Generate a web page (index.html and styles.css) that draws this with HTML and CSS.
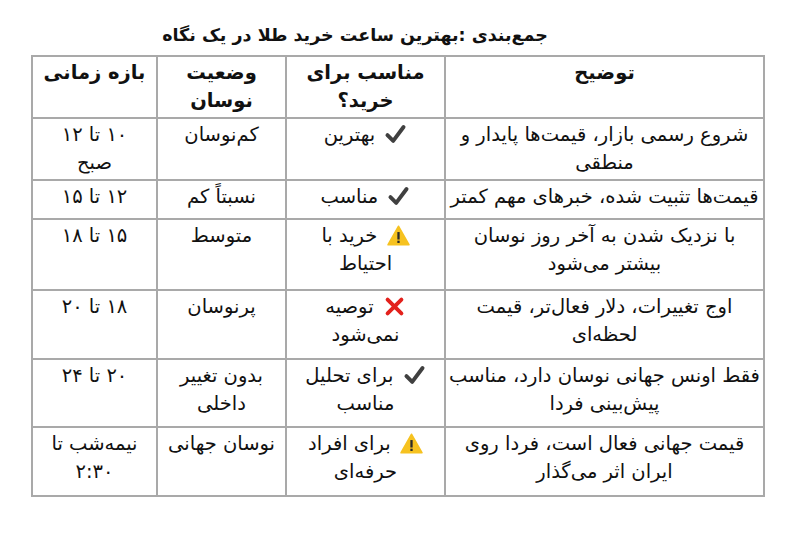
FILE: index.html
```html
<!DOCTYPE html>
<html lang="fa">
<head>
<meta charset="utf-8">
<title>جمع‌بندی</title>
<link rel="stylesheet" href="styles.css">
</head>
<body>
<div class="page">
  <div class="title" dir="rtl">جمع‌بندی :بهترین ساعت خرید طلا در یک نگاه</div>
  <table class="grid" dir="rtl">
    <colgroup>
      <col class="c-desc"><col class="c-fit"><col class="c-vol"><col class="c-time">
    </colgroup>
    <tr class="r-head">
      <th>توضیح</th>
      <th>مناسب برای<br>خرید؟</th>
      <th>وضعیت<br>نوسان</th>
      <th>بازه زمانی</th>
    </tr>
    <tr class="r1">
      <td>شروع رسمی بازار، قیمت‌ها پایدار و<br>منطقی</td>
      <td><svg class="ic" viewBox="0 0 20 20"><path class="chk" d="M3 10.5 L8 15.5 L17 3.5"/></svg> بهترین</td>
      <td>کم‌نوسان</td>
      <td>۱۰ تا ۱۲<br>صبح</td>
    </tr>
    <tr class="r2">
      <td>قیمت‌ها تثبیت شده، خبرهای مهم کمتر</td>
      <td><svg class="ic" viewBox="0 0 20 20"><path class="chk" d="M3 10.5 L8 15.5 L17 3.5"/></svg> مناسب</td>
      <td>نسبتاً کم</td>
      <td>۱۲ تا ۱۵</td>
    </tr>
    <tr class="r3">
      <td>با نزدیک شدن به آخر روز نوسان<br>بیشتر می‌شود</td>
      <td><svg class="ic" viewBox="0 0 20 20"><path class="tri" d="M10 2 L19 18 L1 18 Z"/><rect class="ex" x="9" y="7" width="2" height="6.5"/><rect class="ex" x="9" y="14.5" width="2" height="2"/></svg> خرید با<br>احتیاط</td>
      <td>متوسط</td>
      <td>۱۵ تا ۱۸</td>
    </tr>
    <tr class="r4">
      <td>اوج تغییرات، دلار فعال‌تر، قیمت<br>لحظه‌ای</td>
      <td><svg class="ic" viewBox="0 0 20 20"><path class="crs" d="M4 4 L16 16 M16 4 L4 16"/></svg> توصیه<br>نمی‌شود</td>
      <td>پرنوسان</td>
      <td>۱۸ تا ۲۰</td>
    </tr>
    <tr class="r5">
      <td>فقط اونس جهانی نوسان دارد، مناسب<br>پیش‌بینی فردا</td>
      <td><svg class="ic" viewBox="0 0 20 20"><path class="chk" d="M3 10.5 L8 15.5 L17 3.5"/></svg> برای تحلیل<br>مناسب</td>
      <td>بدون تغییر<br>داخلی</td>
      <td>۲۰ تا ۲۴</td>
    </tr>
    <tr class="r6">
      <td>قیمت جهانی فعال است، فردا روی<br>ایران اثر می‌گذار</td>
      <td><svg class="ic" viewBox="0 0 20 20"><path class="tri" d="M10 2 L19 18 L1 18 Z"/><rect class="ex" x="9" y="7" width="2" height="6.5"/><rect class="ex" x="9" y="14.5" width="2" height="2"/></svg> برای افراد<br>حرفه‌ای</td>
      <td>نوسان جهانی</td>
      <td>نیمه‌شب تا<br>۲:۳۰</td>
    </tr>
  </table>
</div>
</body>
</html>
```
FILE: styles.css
```css
html, body {
  margin: 0;
  padding: 0;
  background: #ffffff;
}
.page {
  padding: 22px 37px 0 31px;
  font-family: "DejaVu Sans", "Noto Sans", sans-serif;
  color: #111111;
}
.title {
  height: 33px;
  line-height: 26px;
  font-size: 17.5px;
  font-weight: bold;
  text-align: center;
  padding-right: 84px;
}
.grid {
  width: 732px;
  border-collapse: collapse;
  table-layout: fixed;
  font-size: 19.5px;
  line-height: 28px;
}
.c-desc { width: 319px; }
.c-fit { width: 159px; }
.c-vol { width: 129px; }
.c-time { width: 125px; }
.grid th, .grid td {
  border: 2px solid #a9a9a9;
  vertical-align: top;
  text-align: center;
  padding: 2px 2px 0;
  font-weight: normal;
  white-space: nowrap;
}
.grid th {
  font-weight: bold;
}
.r-head { height: 62px; }
.r1 { height: 62px; }
.r2 { height: 39px; }
.r3 { height: 71px; }
.r4 { height: 69px; }
.r5 { height: 68px; }
.r6 { height: 69px; }
.ic {
  width: 23px;
  height: 23px;
  vertical-align: -5px;
  margin-left: 3px;
}
.chk {
  fill: none;
  stroke: #404040;
  stroke-width: 3.4;
  stroke-linecap: round;
  stroke-linejoin: round;
}
.crs {
  fill: none;
  stroke: #e3211c;
  stroke-width: 3.4;
  stroke-linecap: round;
}
.tri {
  fill: #f6c220;
  stroke: #f6c220;
  stroke-width: 1.5;
  stroke-linejoin: round;
}
.ex {
  fill: #2a2a2a;
}
```
